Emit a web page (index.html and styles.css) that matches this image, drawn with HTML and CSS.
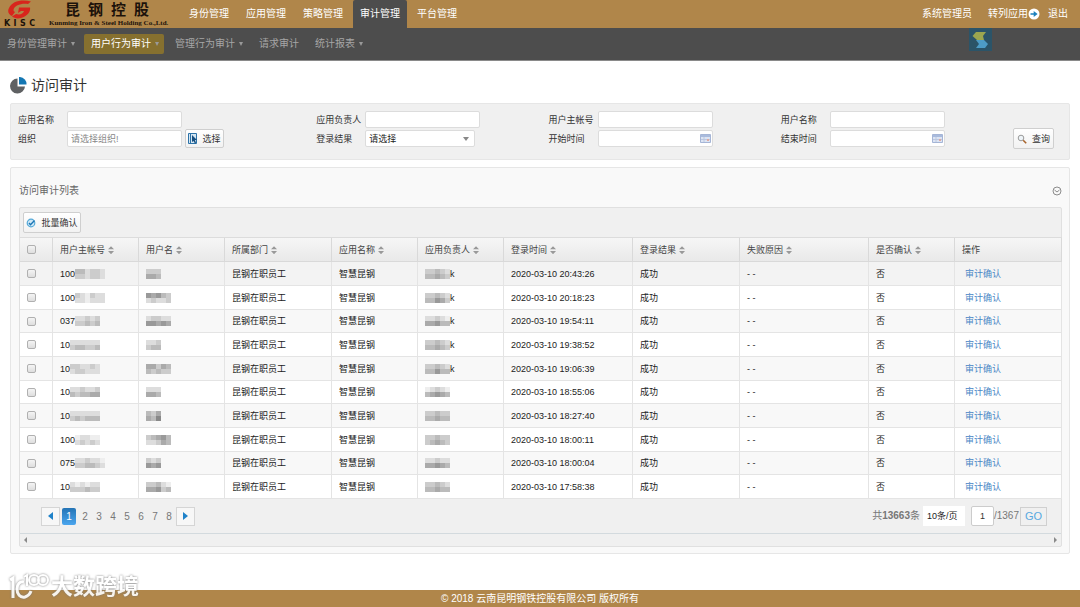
FILE: index.html
```html
<!DOCTYPE html>
<html lang="zh-CN">
<head>
    <meta charset="UTF-8">
    <meta name="viewport" content="width=device-width, initial-scale=1.0">
    <title>访问审计</title>
    <link rel="stylesheet" href="styles.css">
</head>
<body>
    <header class="topbar">
        <a class="brand" href="#">
            <div class="brand-mark">
                <svg width="24" height="19" viewBox="0 0 24 19">
                    <path fill="#d8251c" d="M23 1.500C14-1 4 1 1 8c-2 4 0 7 3 8l3-4C4 11 6 7 9 5.500c4-2 8-2 11-1.500z"/>
                    <path fill="#d8251c" d="M11 7.500h11c1 4-3 9-9 10.500-4 1-7 0-9-1.500l4-2.500c4 1 7 0 8-3h-3l-3 2z"/>
                </svg>
                <div class="brand-code"><span>K</span><span>I</span><span>S</span><span>C</span></div>
            </div>
            <div class="brand-text">
                <div class="brand-name"><span>昆</span><span>钢</span><span>控</span><span>股</span></div>
                <div class="brand-en">Kunming Iron &amp; Steel Holding Co.,Ltd.</div>
            </div>
        </a>
        <nav class="main-nav">
            <a href="#">身份管理</a>
            <a href="#">应用管理</a>
            <a href="#">策略管理</a>
            <a href="#" class="active">审计管理</a>
            <a href="#">平台管理</a>
        </nav>
        <div class="user-links">
            <a href="#">系统管理员</a>
            <a href="#" class="switch-app">转列应用<svg width="12" height="12" viewBox="0 0 12 12"><circle cx="6" cy="6" r="5.500" fill="#fff"/><path fill="#1b80bd" d="M2.500 5.200h3.200V3L9.600 6 5.700 9V6.800H2.500z"/></svg></a>
            <a href="#">退出</a>
        </div>
    </header>

    <nav class="sub-nav">
        <a href="#" class="has-menu">身份管理审计</a>
        <a href="#" class="has-menu active">用户行为审计</a>
        <a href="#" class="has-menu">管理行为审计</a>
        <a href="#">请求审计</a>
        <a href="#" class="has-menu">统计报表</a>
        <svg class="theme-icon" width="23" height="23" viewBox="0 0 23 23">
            <rect width="23" height="23" fill="#2b5468"/>
            <path fill="#9aa64f" d="M7 4h10l-3 4 1 4H8L3.500 8z"/>
            <path fill="#4d9cc6" d="M7 12h8l4 4-3 4H7l3-4z"/>
        </svg>
    </nav>

    <main>
        <h1 class="page-title">
            <svg width="17" height="17" viewBox="0 0 17 17">
                <path fill="#5f6163" d="M7.500 1.500a7.500 7.500 0 1 0 7.500 8H7.500z"/>
                <path fill="#1477b3" d="M9 0h1a7 7 0 0 1 6.500 7.500H9z"/>
            </svg>
            访问审计
        </h1>

        <form class="panel filter">
            <div class="field">
                <label for="appName">应用名称</label>
                <input type="text" id="appName">
            </div>
            <div class="field">
                <label for="appOwner">应用负责人</label>
                <input type="text" id="appOwner">
            </div>
            <div class="field">
                <label for="account">用户主帐号</label>
                <input type="text" id="account">
            </div>
            <div class="field">
                <label for="userName">用户名称</label>
                <input type="text" id="userName">
            </div>
            <button type="button" class="btn query">
                <svg width="10" height="10" viewBox="0 0 10 10"><circle cx="4" cy="4" r="2.800" fill="#eef4f8" stroke="#9a9a9a"/><path d="M6.200 6.200l3 3" stroke="#a8642c" stroke-width="1.600"/></svg>
                查询
            </button>
            <div class="field">
                <label for="org">组织</label>
                <input type="text" id="org" placeholder="请选择组织!">
                <button type="button" class="btn pick">
                    <svg width="10" height="11" viewBox="0 0 10 11"><path fill="#d5e6f2" stroke="#2d73a8" d="M.5.500h8v10h-8z"/><path stroke="#2d73a8" d="M2.500 1v9"/><path fill="#174f80" d="M4 2l5 5H7l1 3-1 .5L5.500 8 4 9z"/></svg>
                    选择
                </button>
            </div>
            <div class="field">
                <label for="result">登录结果</label>
                <div class="select-box">
                    <select id="result"><option>请选择</option><option>成功</option><option>失败</option></select>
                </div>
            </div>
            <div class="field">
                <label for="startTime">开始时间</label>
                <div class="date-box">
                    <input type="text" id="startTime">
                    <svg width="11" height="9" viewBox="0 0 11 9"><path fill="#dce4f3" stroke="#a5b5d6" d="M.5.500h10v8H.5z"/><path fill="#a9bbdd" d="M1 1h9v2H1z"/><path stroke="#bcc8e0" d="M1 5.500h9M4 3v5"/><path fill="#e0a9a0" d="M7 5h2v2H7z"/></svg>
                </div>
            </div>
            <div class="field">
                <label for="endTime">结束时间</label>
                <div class="date-box">
                    <input type="text" id="endTime">
                    <svg width="11" height="9" viewBox="0 0 11 9"><path fill="#dce4f3" stroke="#a5b5d6" d="M.5.500h10v8H.5z"/><path fill="#a9bbdd" d="M1 1h9v2H1z"/><path stroke="#bcc8e0" d="M1 5.500h9M4 3v5"/><path fill="#e0a9a0" d="M7 5h2v2H7z"/></svg>
                </div>
            </div>
        </form>

        <section class="panel list">
            <div class="list-head">
                <h2>访问审计列表</h2>
                <button type="button" class="collapse" aria-label="收起">
                    <svg width="10" height="10" viewBox="0 0 10 10" fill="none" stroke="#8c8c8c"><circle cx="5" cy="5" r="4"/><path d="M2.500 4L5 6l2.500-2"/></svg>
                </button>
            </div>
            <div class="grid">
                <div class="toolbar">
                    <button type="button" class="btn confirm">
                        <svg width="10" height="10" viewBox="0 0 10 10"><circle cx="5" cy="5" r="3.800" fill="#cfe8f6" stroke="#55a9d8" stroke-width="1.200"/><path d="M3 5l1.500 1.800L8.500 2.500" fill="none" stroke="#1d76b5" stroke-width="1.400"/></svg>
                        批量确认
                    </button>
                </div>
                <table>
                    <colgroup>
                        <col class="w-check"><col class="w-s"><col class="w-s"><col class="w-m"><col class="w-s"><col class="w-s">
                        <col class="w-l"><col class="w-m"><col class="w-l"><col class="w-s"><col class="w-m">
                    </colgroup>
                    <thead>
                        <tr>
                            <th><input type="checkbox" aria-label="全选"></th>
                            <th class="sort">用户主帐号</th>
                            <th class="sort">用户名</th>
                            <th class="sort">所属部门</th>
                            <th class="sort">应用名称</th>
                            <th class="sort">应用负责人</th>
                            <th class="sort">登录时间</th>
                            <th class="sort">登录结果</th>
                            <th class="sort">失败原因</th>
                            <th class="sort">是否确认</th>
                            <th>操作</th>
                        </tr>
                    </thead>
                    <tbody id="rows"></tbody>
                </table>
                <div class="pager">
                    <div class="pages">
                        <button type="button" class="step" aria-label="上一页"><svg width="5" height="8" viewBox="0 0 5 8"><path fill="#1f82c9" d="M5 0v8L0 4z"/></svg></button>
                        <a href="#" class="current">1</a>
                        <a href="#">2</a>
                        <a href="#">3</a>
                        <a href="#">4</a>
                        <a href="#">5</a>
                        <a href="#">6</a>
                        <a href="#">7</a>
                        <a href="#">8</a>
                        <button type="button" class="step" aria-label="下一页"><svg width="5" height="8" viewBox="0 0 5 8"><path fill="#1f82c9" d="M0 0v8l5-4z"/></svg></button>
                    </div>
                    <div class="jump">
                        <span>共<b>13663</b>条</span>
                        <select class="page-size" aria-label="每页条数"><option>10条/页</option></select>
                        <input type="text" class="page-no" value="1" aria-label="页码">
                        <span class="total">/1367</span>
                        <button type="button" class="go">GO</button>
                    </div>
                </div>
                <div class="scroll-track">
                    <svg width="3" height="6" viewBox="0 0 3 6"><path fill="#8a8a8a" d="M3 0v6L0 3z"/></svg>
                    <svg width="3" height="6" viewBox="0 0 3 6"><path fill="#8a8a8a" d="M0 0v6l3-3z"/></svg>
                </div>
            </div>
        </section>
    </main>

    <footer class="footer">© 2018 云南昆明钢铁控股有限公司 版权所有</footer>

    <div class="watermark">
        <svg width="40" height="28" viewBox="0 0 40 28" fill="none" stroke="#fff" stroke-width="3">
            <path d="M1 7l3-2v20"/>
            <path d="M15 9c-4-1-7 2-7 7s3 9 8 8c3-1 5-3 6-6"/>
            <path d="M15 4l3-2v11" stroke-width="2"/>
            <circle cx="25" cy="7" r="5" stroke-width="2"/>
            <circle cx="34" cy="7" r="5" stroke-width="2"/>
        </svg>
        <span>大数跨境</span>
    </div>

    <script src="script.js"></script>
</body>
</html>
```

FILE: styles.css
```css
* {
    box-sizing: border-box;
}

body {
    margin: 0;
    min-height: 100vh;
    display: flex;
    flex-direction: column;
    background: #fff;
    color: #333;
    font-family: "Liberation Sans", "Noto Sans CJK SC", sans-serif;
    font-size: 9px;
    line-height: 12px;
}

a {
    color: inherit;
    text-decoration: none;
}

input, select, button {
    font: inherit;
    color: inherit;
    margin: 0;
}

svg {
    flex-shrink: 0;
}

/* Header */
.topbar {
    display: flex;
    height: 28px;
    background: #b0864a;
    color: #fff;
    font-size: 10px;
}

.brand {
    display: flex;
    width: 182px;
    padding-left: 4px;
    gap: 14px;
    color: #1c120a;
}

.brand-mark {
    width: 31px;
}

.brand-mark svg {
    display: block;
    margin: 0 auto;
}

.brand-code {
    display: flex;
    justify-content: space-between;
    font: bold 8px/9px "DejaVu Sans", sans-serif;
}

.brand-name {
    display: flex;
    gap: 8px;
    padding-left: 16px;
    font-size: 15px;
    font-weight: bold;
    line-height: 19px;
}

.brand-en {
    font: bold 7px/9px "Liberation Serif", serif;
    white-space: nowrap;
}

.main-nav {
    display: flex;
    gap: 3px;
    line-height: 28px;
}

.main-nav a {
    padding: 0 7px;
}

.main-nav .active {
    background: #4d4d4d;
    border-radius: 2px 2px 0 0;
}

.user-links {
    display: flex;
    margin-left: auto;
    padding-right: 12px;
    gap: 8px;
    line-height: 28px;
}

.switch-app {
    display: flex;
    align-items: center;
    margin-left: 8px;
}

/* Second level menu */
.sub-nav {
    display: flex;
    align-items: center;
    gap: 4px;
    height: 33px;
    background: #4d4d4d;
    border-bottom: 1px solid #8a8a8a;
    color: #a6a6a6;
    font-size: 10px;
    line-height: 20px;
}

.sub-nav a {
    display: flex;
    align-items: center;
    gap: 4px;
    padding: 0 5px 0 7px;
    border-radius: 2px;
}

.has-menu::after {
    content: "";
    border: 2px solid transparent;
    border-top: 4px solid #999;
    border-bottom: 0;
}

.sub-nav .active {
    background: #86702f;
    color: #fff;
}

.theme-icon {
    align-self: flex-start;
    margin-left: auto;
    margin-right: 88px;
}

/* Content */
main {
    padding: 0 10px;
}

.page-title {
    display: flex;
    align-items: center;
    gap: 4px;
    height: 42px;
    margin: 0;
    padding: 6px 0 0;
    font-size: 14px;
    font-weight: normal;
}

.panel {
    border: 1px solid #e6e6e6;
    border-radius: 2px;
}

.filter {
    display: grid;
    grid-template-columns: 298fr 232fr 232fr 232fr 49fr;
    grid-auto-rows: 17px;
    gap: 2px 0;
    padding: 7px 7px 12px;
    background: #f0f0f0;
}

.field {
    display: flex;
    align-items: center;
}

.field label {
    width: 49px;
}

.field input, .field select {
    width: 115px;
    height: 17px;
    padding: 0 3px;
    border: 1px solid #dcdcdc;
    border-radius: 2px;
    background: #fff;
}

.field input::placeholder {
    color: #888;
}

.field select {
    width: 110px;
    appearance: none;
    color: #222;
}

.select-box, .date-box {
    display: flex;
    position: relative;
}

.select-box::after {
    content: "";
    position: absolute;
    right: 6px;
    top: 7px;
    border: 3px solid transparent;
    border-top: 4px solid #888;
    border-bottom: 0;
}

.date-box svg {
    position: absolute;
    right: 2px;
    top: 4px;
}

.btn {
    display: flex;
    align-items: center;
    justify-content: center;
    height: 21px;
    padding: 0 2px;
    gap: 5px;
    border: 1px solid #cfcfcf;
    border-radius: 2px;
    background: linear-gradient(#fff, #f2f2f2);
    white-space: nowrap;
}

.pick {
    width: 39px;
    height: 19px;
    margin-left: 3px;
    gap: 4px;
}

.query {
    grid-column: 5;
    grid-row: 1 / 3;
    align-self: end;
    justify-self: start;
    width: 41px;
    margin-bottom: -2px;
}

/* List */
.list {
    margin-top: 7px;
    padding: 0 7px 6px 8px;
    background: #f9f9f9;
}

.list-head {
    display: flex;
    align-items: center;
    justify-content: space-between;
    height: 39px;
    padding-top: 6px;
}

.list-head h2 {
    margin: 0;
    font-size: 10px;
    font-weight: normal;
    color: #666;
}

.collapse {
    display: flex;
    padding: 0;
    border: 0;
    background: none;
}

.grid {
    border: 1px solid #e0e0e0;
    border-radius: 2px;
    background: #f0f0f0;
}

.toolbar {
    padding: 4px 3px;
}

.confirm {
    width: 58px;
}

table {
    width: 100%;
    table-layout: fixed;
    border-spacing: 0;
    border-top: 1px solid #dcdcdc;
}

.w-check {
    width: 33px;
}

.w-s {
    width: 86px;
}

.w-m {
    width: 107px;
}

.w-l {
    width: 129px;
}

th, td {
    height: 24px;
    padding: 0 0 0 7px;
    border-right: 1px solid #e4e4e4;
    border-bottom: 1px solid #e4e4e4;
    text-align: left;
    font-weight: normal;
    white-space: nowrap;
}

th {
    background: linear-gradient(#f6f6f6, #e9e9e9);
    border-color: #d9d9d9;
    color: #444;
}

td {
    background: #fff;
    color: #222;
}

tr:nth-child(odd) td {
    background: #f8f8f8;
}

tbody tr:nth-child(3n) td {
    height: 23px;
}

tbody tr:first-child td {
    background: #f3f3f3;
}

th input, td input {
    display: block;
    appearance: none;
    width: 9px;
    height: 9px;
    border: 1px solid #b0b0b0;
    border-radius: 2px;
    background: linear-gradient(#f4f4f4, #dedede);
}

/* Up and down arrows beside sortable titles */
.sort::after {
    content: "";
    display: inline-block;
    width: 6px;
    height: 8px;
    margin-left: 3px;
    vertical-align: middle;
    background: #999;
    clip-path: polygon(50% 0, 100% 40%, 0 40%, 0 60%, 100% 60%, 50% 100%, 0 60%, 0 40%);
}

.action {
    padding-left: 3px;
    color: #4a86c5;
}

.cell {
    display: flex;
    align-items: center;
}

/* Pager */
.pager {
    display: flex;
    align-items: center;
    justify-content: space-between;
    height: 34px;
    padding: 0 14px 0 21px;
    color: #777;
    font-size: 10px;
}

.pages, .jump {
    display: flex;
    align-items: center;
}

.pages a {
    width: 14px;
    line-height: 17px;
    text-align: center;
}

.pages .current {
    margin: 0 2px;
    border-radius: 2px;
    background: linear-gradient(#2474b5, #4aa5ee);
    color: #fff;
}

.step {
    display: flex;
    align-items: center;
    justify-content: center;
    width: 19px;
    height: 19px;
    padding: 0;
    border: 1px solid #d5d5d5;
    background: #f7f7f7;
}

.page-size {
    appearance: none;
    width: 42px;
    height: 20px;
    margin: 0 6px 0 3px;
    padding: 0 4px;
    border: 0;
    background: #fff;
    color: #222;
    font-size: 9px;
}

.page-no {
    width: 23px;
    height: 20px;
    padding: 0;
    border: 1px solid #ccc;
    border-radius: 2px;
    background: #fff;
    color: #333;
    font-size: 9px;
    text-align: center;
}

.go {
    width: 27px;
    height: 19px;
    margin-left: 1px;
    padding: 0;
    border: 1px solid #d0d0d0;
    background: #f0f0f0;
    color: #58a9e0;
    font-size: 11px;
}

.scroll-track {
    display: flex;
    align-items: center;
    justify-content: space-between;
    height: 13px;
    padding: 0 4px;
    border-top: 1px solid #d3dade;
}

/* Footer */
.footer {
    margin-top: auto;
    background: #b0864a;
    color: #fff;
    font-size: 10px;
    line-height: 17px;
    text-align: center;
}

.watermark {
    position: fixed;
    left: 9px;
    bottom: 5px;
    display: flex;
    align-items: center;
    gap: 2px;
    color: #fff;
    font-size: 22px;
    font-weight: bold;
    line-height: 30px;
    opacity: 0.9;
    filter: drop-shadow(0 0 1px #777);
}
```

FILE: script.js
```js
// account prefix, account mask, name mask, manager mask, manager suffix, login time
// masks are two rows of grey levels, one hex digit per block
const records = [
    ["100", "bbdccd/ccdccd", "ccc/aab", "ccbcd/bbabc", "k", "2020-03-10 20:43:26"],
    ["100", "cdecdd/ddeddd", "9a9bc/dcddc", "ccbcd/bb9ac", "k", "2020-03-10 20:18:23"],
    ["037", "ddcdc/ccbcb", "dccdd/99a9a", "ddcde/aa9bb", "k", "2020-03-10 19:54:11"],
    ["10", "dddddd/cbbccb", "ddc/cbb", "ccbcd/bbabc", "k", "2020-03-10 19:38:52"],
    ["10", "ccddcd/dccddd", "aacab/bcbcc", "ccbcd/bb9bb", "k", "2020-03-10 19:06:39"],
    ["10", "ddcddc/bcbbaa", "ddd/aab", "edcde/ba9ab", "", "2020-03-10 18:55:06"],
    ["10", "dddddd/cbcbbb", "bca/ab8", "ccbcc/bbabb", "", "2020-03-10 18:27:40"],
    ["100", "eddee/dcdcd", "cba9b/ddcab", "ccbcc/cbabc", "", "2020-03-10 18:00:11"],
    ["075", "ddcdde/ccbbcd", "cdc/9a9", "ddcdd/aa9ab", "", "2020-03-10 18:00:04"],
    ["10", "dededd/cccbcc", "ccbde/aa9cb", "ccbcd/bbabb", "", "2020-03-10 17:58:38"]
];

function mask(levels) {
    const lines = levels.split("/");
    const blocks = lines.map((line, y) =>
        [...line].map((g, x) => `<rect x="${x * 5}" y="${y * 5}" width="5" height="5" fill="#${g}${g}${g}"/>`).join("")
    ).join("");
    return `<svg width="${lines[0].length * 5}" height="10" shape-rendering="crispEdges">${blocks}</svg>`;
}

document.getElementById("rows").innerHTML = records.map(([prefix, account, name, manager, suffix, time], i) => `
    <tr>
        <td><input type="checkbox" aria-label="选择第${i + 1}行"></td>
        <td><div class="cell">${prefix}${mask(account)}</div></td>
        <td><div class="cell">${mask(name)}</div></td>
        <td>昆钢在职员工</td>
        <td>智慧昆钢</td>
        <td><div class="cell">${mask(manager)}${suffix}</div></td>
        <td>${time}</td>
        <td>成功</td>
        <td>- -</td>
        <td>否</td>
        <td><a href="#" class="action">审计确认</a></td>
    </tr>`).join("");
```
